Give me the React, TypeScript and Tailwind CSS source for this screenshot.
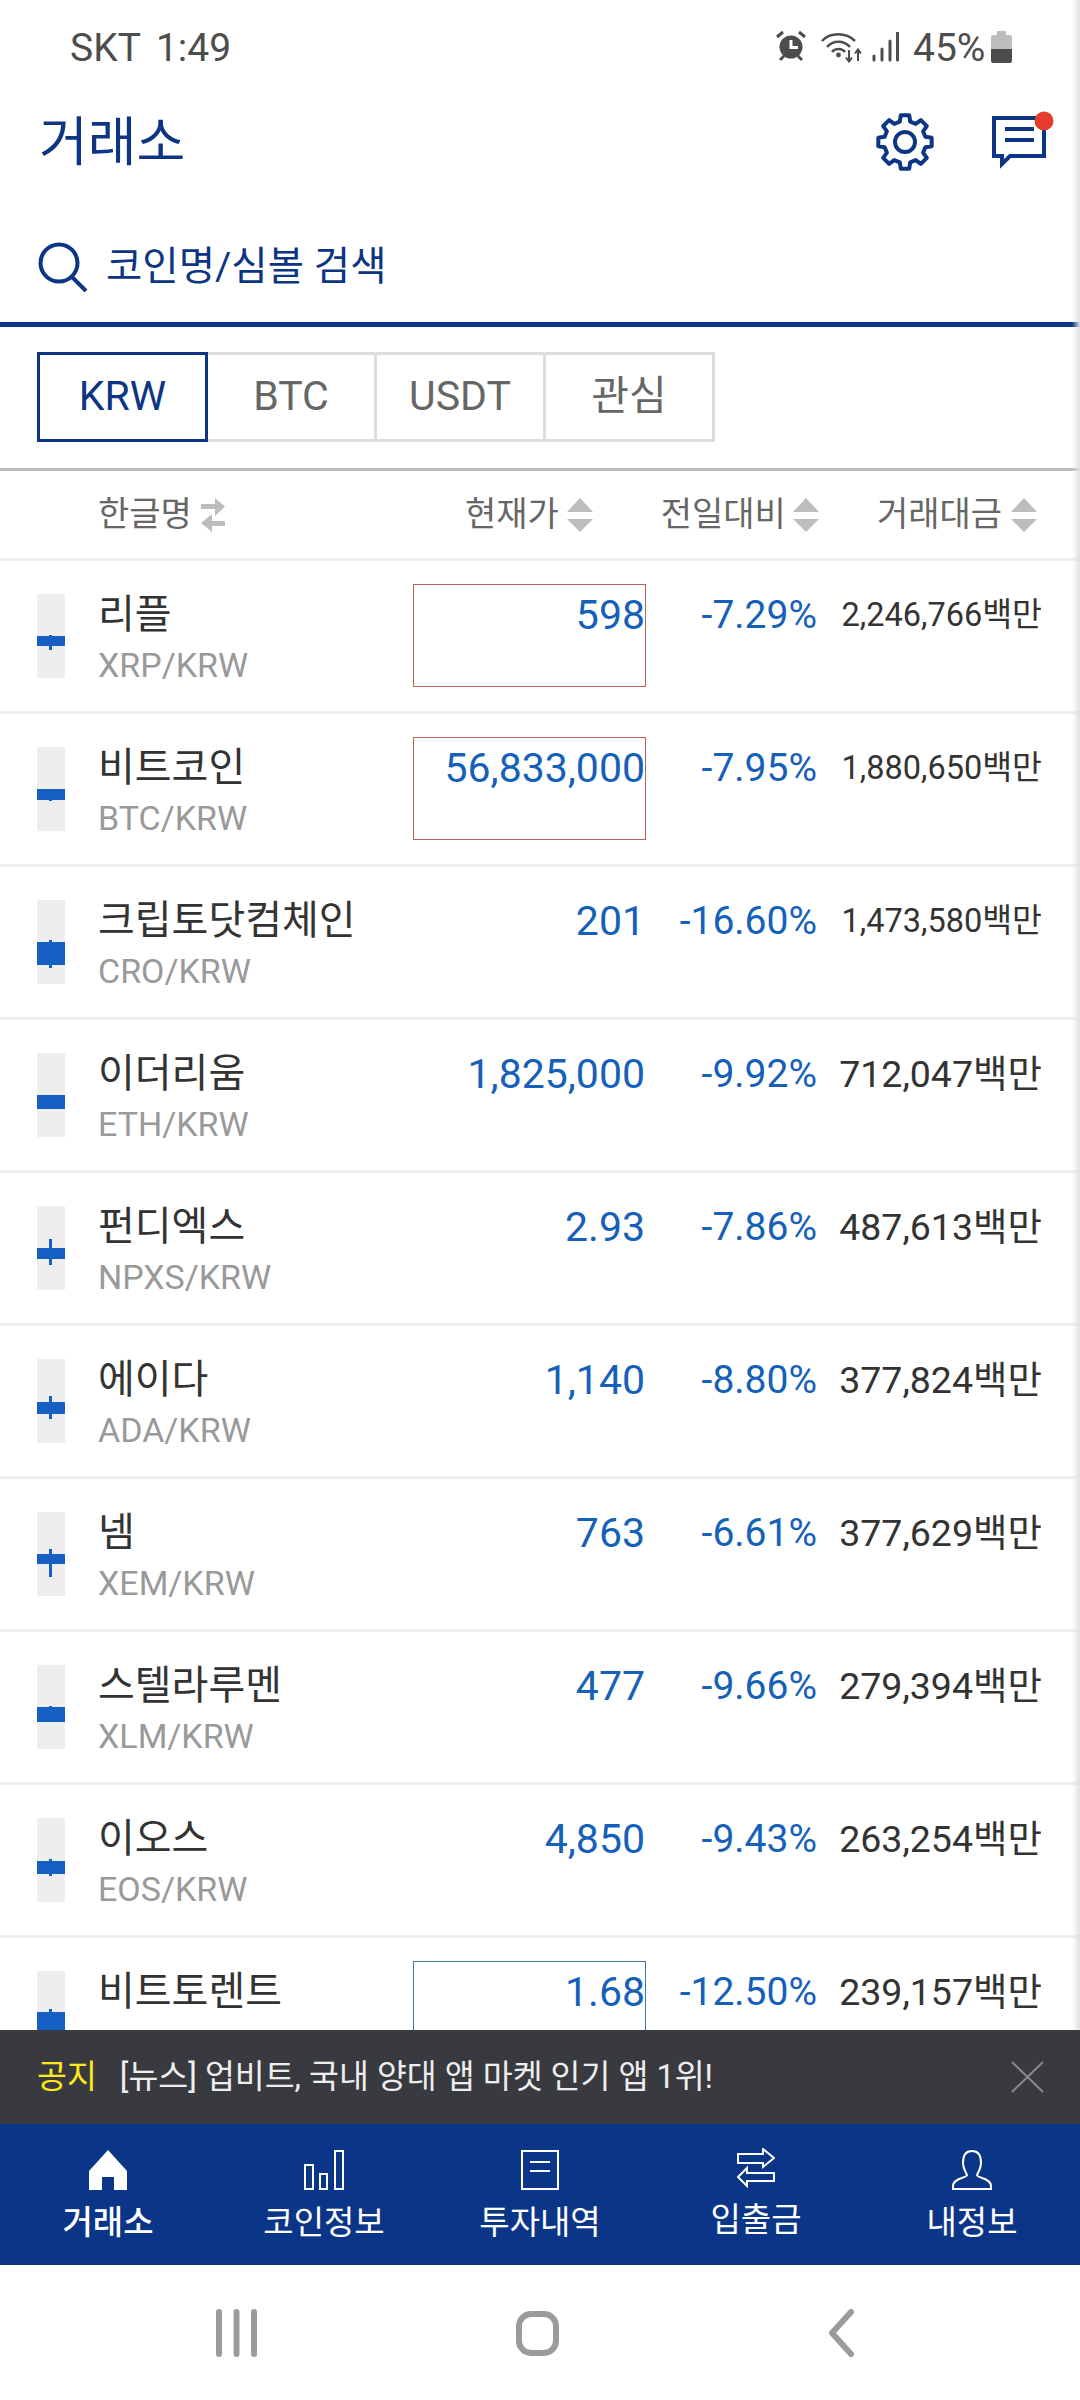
import React from "react";

const NAVY = "#0c3584";
const F = { fontFamily: '"Roboto","Noto Sans CJK KR",sans-serif' };

type Row = {
  n: string; s: string; p: string; c: string; v: string; tight?: boolean;
  box?: string; body: [number, number]; wick?: [number, number];
};
const rows: Row[] = [
  { n: "리플", s: "XRP/KRW", p: "598", c: "-7.29%", v: "2,246,766백만", tight: true, box: "border-[#b9605a]", body: [42, 52], wick: [41, 56] },
  { n: "비트코인", s: "BTC/KRW", p: "56,833,000", c: "-7.95%", v: "1,880,650백만", tight: true, box: "border-[#b9605a]", body: [42, 53], wick: [42, 54] },
  { n: "크립토닷컴체인", s: "CRO/KRW", p: "201", c: "-16.60%", v: "1,473,580백만", tight: true, body: [42, 65], wick: [40, 68] },
  { n: "이더리움", s: "ETH/KRW", p: "1,825,000", c: "-9.92%", v: "712,047백만", body: [42, 56] },
  { n: "펀디엑스", s: "NPXS/KRW", p: "2.93", c: "-7.86%", v: "487,613백만", body: [42, 53], wick: [33, 59] },
  { n: "에이다", s: "ADA/KRW", p: "1,140", c: "-8.80%", v: "377,824백만", body: [43, 55], wick: [37, 60] },
  { n: "넴", s: "XEM/KRW", p: "763", c: "-6.61%", v: "377,629백만", body: [42, 52], wick: [37, 65] },
  { n: "스텔라루멘", s: "XLM/KRW", p: "477", c: "-9.66%", v: "279,394백만", body: [42, 57], wick: [41, 57] },
  { n: "이오스", s: "EOS/KRW", p: "4,850", c: "-9.43%", v: "263,254백만", body: [43, 56], wick: [41, 58] },
  { n: "비트토렌트", s: "BTT/KRW", p: "1.68", c: "-12.50%", v: "239,157백만", box: "border-[#3f78ad]", body: [41, 84], wick: [38, 84] },
];

function gearPath(cx: number, cy: number, ro: number, ri: number, teeth: number) {
  const pts: string[] = [];
  const step = (Math.PI * 2) / teeth;
  for (let i = 0; i < teeth; i++) {
    const a = i * step - Math.PI / 2;
    const list: [number, number][] = [
      [ri, a - step * 0.32], [ro, a - step * 0.2], [ro, a + step * 0.2], [ri, a + step * 0.32],
    ];
    list.forEach(([r, t]) => pts.push(`${(cx + r * Math.cos(t)).toFixed(2)} ${(cy + r * Math.sin(t)).toFixed(2)}`));
  }
  return "M" + pts.join("L") + "Z";
}

function SortArrows() {
  return (
    <svg width="26" height="34" viewBox="0 0 26 34" className="shrink-0 block">
      <path d="M13 0L26 14H0Z" fill="#bdbdbd" />
      <path d="M0 21H26L13 34Z" fill="#bdbdbd" />
    </svg>
  );
}

function Candle({ body, wick }: { body: [number, number]; wick?: [number, number] }) {
  return (
    <svg width="28" height="84" viewBox="0 0 28 84" className="shrink-0 bg-[#eeeeee] block">
      {wick && <rect x="12" y={wick[0]} width="3" height={wick[1] - wick[0]} fill="#1560c2" />}
      <rect x="0" y={body[0]} width="28" height={body[1] - body[0]} fill="#1560c2" />
    </svg>
  );
}

function StatusBar() {
  return (
    <div className="h-[90px] shrink-0 flex items-start pt-[25px] pl-[70px] text-[#4d4d4d] text-[39px] leading-[46px]">
      <span>SKT</span>
      <span className="ml-[15px]">1:49</span>
      <div className="ml-auto flex items-start">
        <svg width="32" height="32" viewBox="0 0 32 32" className="mt-[5px]">
          <circle cx="16" cy="17" r="11.5" fill="#4d4d4d" />
          <path d="M16 10V17.5H23" stroke="#fff" strokeWidth="3" fill="none" />
          <path d="M2 7L8 2M30 7L24 2M5 30L9 26M27 30L23 26" stroke="#4d4d4d" strokeWidth="3" fill="none" />
        </svg>
        <svg width="42" height="32" viewBox="0 0 42 32" className="ml-[14px] mt-[6px]">
          <path d="M1 10C9 1 25 1 34 10M6 16C12 9 23 9 29 16M11 21C14 17 21 17 24 21" stroke="#4d4d4d" strokeWidth="2.6" fill="none" />
          <circle cx="17.5" cy="24" r="2.4" fill="#4d4d4d" />
          <path d="M28 19V30M25 26.5L28 30.5L31 26.5M37 30V19M34 22.5L37 18.5L40 22.5" stroke="#4d4d4d" strokeWidth="2" fill="none" />
        </svg>
        <svg width="27" height="30" viewBox="0 0 27 30" className="ml-[9px] mt-[7px]">
          <path d="M2 24V28M10 17V28M18 9V28M25.5 1V28" stroke="#4d4d4d" strokeWidth="3" strokeLinecap="round" fill="none" />
        </svg>
        <span className="ml-[14px] w-[72px]">45%</span>
        <div className="ml-[6px] mt-[6px] w-[21px] flex flex-col items-center">
          <div className="w-[9px] h-[4px] bg-[#bdbdbd]" />
          <div className="w-[21px] h-[14px] bg-[#bdbdbd] rounded-t-[2px]" />
          <div className="w-[21px] h-[14px] bg-[#4d4d4d] rounded-b-[2px]" />
        </div>
        <div className="w-[68px]" />
      </div>
    </div>
  );
}

function TitleBar() {
  return (
    <div className="h-[100px] shrink-0 flex items-center pl-[39px]">
      <span className="text-[53px] leading-[60px] mt-[5px]" style={{ color: NAVY }}>거래소</span>
      <div className="ml-auto flex items-center">
        <svg width="58" height="58" viewBox="0 0 58 58" className="mt-[3px]">
          <path d={gearPath(29, 29, 27, 21, 8)} stroke={NAVY} strokeWidth="4" fill="none" strokeLinejoin="round" />
          <circle cx="29" cy="29" r="10" stroke={NAVY} strokeWidth="4" fill="none" />
        </svg>
        <svg width="64" height="60" viewBox="0 0 64 60" className="ml-[58px] mr-[24px] mt-[-1px]">
          <path d="M2 8H52V46H18L10 54V46H2Z" stroke={NAVY} strokeWidth="4" fill="none" />
          <path d="M13 19H42M13 30H42" stroke={NAVY} strokeWidth="4" fill="none" />
          <circle cx="52" cy="11" r="9.5" fill="#e53c30" />
        </svg>
      </div>
    </div>
  );
}

function Search() {
  return (
    <div className="h-[132px] shrink-0 flex items-start pt-[53px] pl-[38px]">
      <svg width="50" height="50" viewBox="0 0 50 50" className="mt-[-1px]">
        <circle cx="21" cy="21" r="18.5" stroke={NAVY} strokeWidth="4" fill="none" />
        <path d="M33 34L48 49" stroke={NAVY} strokeWidth="4" fill="none" />
      </svg>
      <span className="ml-[18px] text-[39.500px] leading-[48px]" style={{ color: NAVY }}>코인명/심볼 검색</span>
    </div>
  );
}

function Tabs() {
  const cls = "w-[172px] h-[90px] flex items-center justify-center text-[41px] text-[#666666] border-[3px] border-[#dddddd] ml-[-3px]";
  return (
    <div className="h-[146px] shrink-0 pt-[25px] pl-[37px] flex items-start border-t-[5px] border-[#0c3584]">
      <div className="w-[171px] h-[90px] flex items-center justify-center text-[41px] border-[3px] border-[#0c3584] relative z-10" style={{ color: NAVY }}>KRW</div>
      <div className={cls + " ml-[-1px]"}>BTC</div>
      <div className={cls}>USDT</div>
      <div className={cls}>관심</div>
    </div>
  );
}

function Header() {
  return (
    <div className="h-[93px] shrink-0 flex items-center border-t-[3px] border-b-[3px] border-t-[#bbbbbb] border-b-[#eeeeee] text-[#666666] text-[34px]">
      <span className="ml-[98px]">한글명</span>
      <svg width="26" height="36" viewBox="0 0 26 36" className="ml-[8px]">
        <path d="M1 7H15V1L25 9.500L15 19V12H1Z" fill="#bdbdbd" />
        <path d="M25 24H12V17L1 26L12 35V29H25Z" fill="#bdbdbd" />
      </svg>
      <span className="ml-auto">현재가</span>
      <span className="ml-[8px]"><SortArrows /></span>
      <span className="ml-[68px]">전일대비</span>
      <span className="ml-[7px]"><SortArrows /></span>
      <span className="ml-[58px]">거래대금</span>
      <span className="ml-[9px] mr-[43px]"><SortArrows /></span>
    </div>
  );
}

function CoinRow({ r }: { r: Row }) {
  return (
    <div className="h-[153px] shrink-0 border-b-[3px] border-[#eeeeee] flex items-start pl-[37px] pr-[38px]">
      <div className="mt-[33px]"><Candle body={r.body} wick={r.wick} /></div>
      <div className="ml-[33px] flex-1 min-w-0">
        <div className="mt-[31px] text-[40px] leading-[46px] text-[#333333] whitespace-nowrap">{r.n}</div>
        <div className="mt-[8px] text-[34px] leading-[38px] text-[#999999]">{r.s}</div>
      </div>
      <div className={"mt-[23px] w-[233px] h-[103px] border text-right text-[41px] leading-[48px] text-[#1560b9] pt-[6px] " + (r.box ?? "border-transparent")}>{r.p}</div>
      <div className="mt-[31px] w-[171px] text-right text-[39px] leading-[46px] text-[#1560b9]">{r.c}</div>
      <div className={"mt-[31px] w-[225px] text-right leading-[46px] text-[#333333] whitespace-nowrap " + (r.tight ? "text-[32.500px]" : "text-[37.500px]")}>{r.v}</div>
    </div>
  );
}

function Notice() {
  return (
    <div className="h-[94px] shrink-0 bg-[#383a3f] flex items-center pl-[37px] pr-[36px] text-[32.500px]">
      <span className="text-[#ffe81a]">공지</span>
      <span className="ml-[23px] text-[#eeeeee]">[뉴스] 업비트, 국내 양대 앱 마켓 인기 앱 1위!</span>
      <svg width="33" height="32" viewBox="0 0 33 32" className="ml-auto">
        <path d="M1 1L32 31M32 1L1 31" stroke="#8a8a8a" strokeWidth="2" fill="none" />
      </svg>
    </div>
  );
}

function NavItem({ icon, label, shift, active }: { icon: React.ReactNode; label: string; shift?: boolean; active?: boolean }) {
  return (
    <div className="flex-1 flex flex-col items-center pt-[25px]">
      <div className="h-[42px] flex items-center justify-center">{icon}</div>
      <span className={"text-white text-[33px] leading-[40px] " + (shift ? "mt-[9px] " : "mt-[12px] ") + (active ? "font-medium" : "")}>{label}</span>
    </div>
  );
}

function Nav() {
  return (
    <div className="h-[141px] shrink-0 flex" style={{ backgroundColor: "#0b3586" }}>
      <NavItem label="거래소" active icon={
        <svg width="38" height="40" viewBox="0 0 38 40"><path d="M19 0L38 21V40H25V27H13V40H0V21Z" fill="#fff" /></svg>
      } />
      <NavItem label="코인정보" icon={
        <svg width="40" height="40" viewBox="0 0 40 40" fill="none" stroke="#fff" strokeWidth="2">
          <path d="M1 15H9V39H1ZM16 24H23V39H16ZM31 1H39V39H31Z" />
        </svg>
      } />
      <NavItem label="투자내역" icon={
        <svg width="38" height="40" viewBox="0 0 38 40" fill="none" stroke="#fff" strokeWidth="2">
          <path d="M1 1H37V39H1ZM9 12H29M9 21H29" />
        </svg>
      } />
      <NavItem label="입출금" shift icon={
        <svg width="38" height="40" viewBox="0 0 38 40" fill="none" stroke="#fff" strokeWidth="2" className="mt-[-4px]">
          <path d="M1 6H26V1L37 10L26 19V15H1Z" />
          <path d="M37 25H10V20L1 29L10 38V33H37Z" />
        </svg>
      } />
      <NavItem label="내정보" icon={
        <svg width="40" height="40" viewBox="0 0 40 40" fill="none" stroke="#fff" strokeWidth="2">
          <path d="M20 1C13 1 11 7 11 13C11 19 14 22 15 25C15 28 1 28 1 36V39H39V36C39 28 25 28 25 25C26 22 29 19 29 13C29 7 27 1 20 1Z" />
        </svg>
      } />
    </div>
  );
}

function AndroidBar() {
  return (
    <div className="h-[135px] shrink-0 bg-white">
      <svg width="1080" height="135" viewBox="0 0 1080 135" fill="none" stroke="#9b9b9b" strokeWidth="6" className="block">
        <path d="M219 47V89M236.500 47V89M254 47V89" strokeLinecap="round" />
        <rect x="519" y="49" width="37" height="39" rx="12" />
        <path d="M851 47L832 68L851 89" strokeLinecap="round" strokeLinejoin="round" />
      </svg>
    </div>
  );
}

export default function App() {
  return (
    <div className="relative w-[1080px] h-[2400px] bg-white flex flex-col overflow-hidden" style={F}>
      <StatusBar />
      <TitleBar />
      <Search />
      <Tabs />
      <Header />
      <div className="flex-1 min-h-0 overflow-hidden flex flex-col">
        {rows.map((r) => <CoinRow key={r.s} r={r} />)}
      </div>
      <Notice />
      <Nav />
      <AndroidBar />
      <div className="absolute top-0 right-0 w-[8px] h-[2030px] bg-gradient-to-r from-transparent to-[#e0e0e0]" />
    </div>
  );
}
